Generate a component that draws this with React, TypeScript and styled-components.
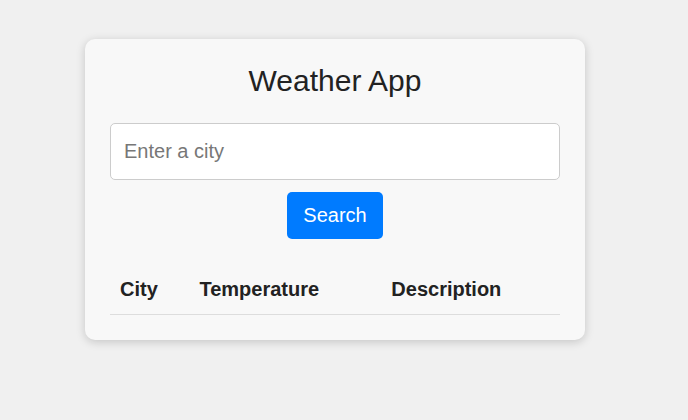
import React from "react";
import styled, { createGlobalStyle } from "styled-components";

const GlobalStyle = createGlobalStyle`
  html, body {
    margin: 0;
    padding: 0;
    background: #f0f0f0;
    font-family: "Liberation Sans", Arial, sans-serif;
  }
`;

const Page = styled.div`
  padding: 39px 0 0 85px;
  min-height: 420px;
  box-sizing: border-box;
`;

const Card = styled.div`
  width: 500px;
  box-sizing: border-box;
  padding: 24px 25px 25px;
  background: #f8f8f8;
  border-radius: 10px;
  box-shadow: 0 2px 10px rgba(0, 0, 0, 0.18);
  display: flex;
  flex-direction: column;
  align-items: center;
`;

const Title = styled.h1`
  margin: 0 0 24px;
  font-size: 30px;
  font-weight: 400;
  line-height: 36px;
  color: #222;
`;

const Input = styled.input`
  width: 100%;
  box-sizing: border-box;
  height: 57px;
  padding: 0 13px;
  font-family: inherit;
  font-size: 20px;
  color: #333;
  background: #fff;
  border: 1px solid #ccc;
  border-radius: 5px;
  outline: none;
  &::placeholder {
    color: #777;
  }
`;

const Button = styled.button`
  margin-top: 12px;
  height: 47px;
  padding: 0 16px;
  font-family: inherit;
  font-size: 20px;
  color: #fff;
  background: #007bff;
  border: none;
  border-radius: 5px;
  cursor: pointer;
`;

const Table = styled.table`
  width: 100%;
  margin-top: 25px;
  border-collapse: collapse;
`;

const Th = styled.th`
  padding: 10px;
  text-align: left;
  font-size: 20px;
  line-height: 30px;
  font-weight: 700;
  color: #222;
  border-bottom: 1px solid #ddd;
`;

export default function App() {
  return (
    <>
      <GlobalStyle />
      <Page>
        <Card>
          <Title>Weather App</Title>
          <Input type="text" placeholder="Enter a city" />
          <Button>Search</Button>
          <Table>
            <thead>
              <tr>
                <Th>City</Th>
                <Th>Temperature</Th>
                <Th>Description</Th>
              </tr>
            </thead>
          </Table>
        </Card>
      </Page>
    </>
  );
}
